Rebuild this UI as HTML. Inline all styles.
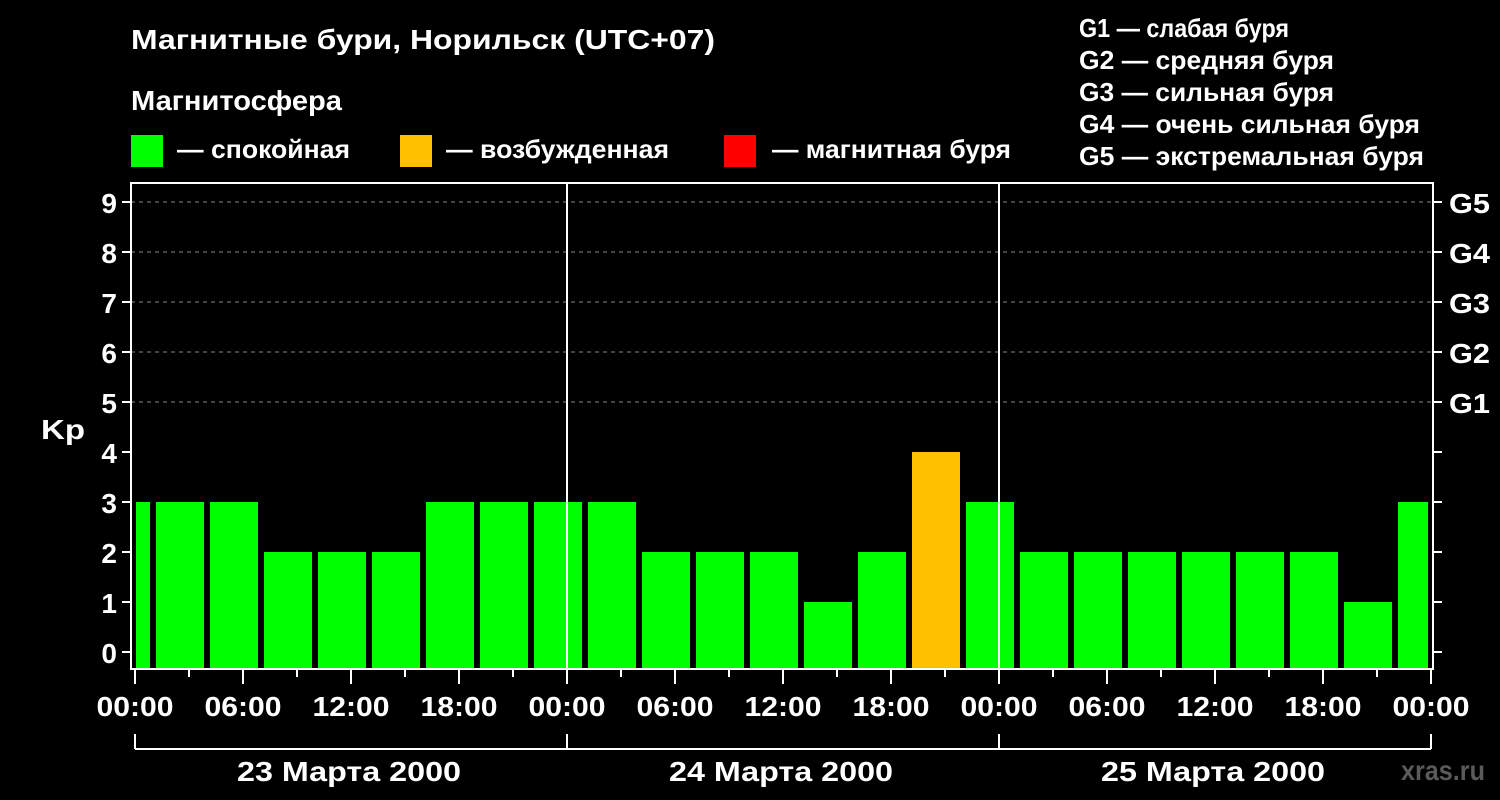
<!DOCTYPE html><html><head><meta charset="utf-8"><style>body{margin:0;background:#000}svg{display:block}text{font-family:"Liberation Sans",Arial,sans-serif;font-weight:bold;fill:#fff}</style></head><body>
<svg width="1500" height="800" xmlns="http://www.w3.org/2000/svg">
<rect width="1500" height="800" fill="#000"/>
<text x="131" y="49" font-size="28" textLength="584" lengthAdjust="spacingAndGlyphs">Магнитные бури, Норильск (UTC+07)</text>
<text x="131" y="110" font-size="28" textLength="211" lengthAdjust="spacingAndGlyphs">Магнитосфера</text>
<rect x="131" y="135" width="32" height="32" fill="#00ff00"/><text x="177" y="158" font-size="26" textLength="173" lengthAdjust="spacingAndGlyphs">— спокойная</text>
<rect x="400" y="135" width="32" height="32" fill="#ffc000"/><text x="446" y="158" font-size="26" textLength="223" lengthAdjust="spacingAndGlyphs">— возбужденная</text>
<rect x="724" y="135" width="32" height="32" fill="#ff0000"/><text x="772" y="158" font-size="26" textLength="239" lengthAdjust="spacingAndGlyphs">— магнитная буря</text>
<g font-size="26"><text x="1079" y="37" textLength="210" lengthAdjust="spacingAndGlyphs">G1 — слабая буря</text><text x="1079" y="69" textLength="255" lengthAdjust="spacingAndGlyphs">G2 — средняя буря</text><text x="1079" y="101" textLength="255" lengthAdjust="spacingAndGlyphs">G3 — сильная буря</text><text x="1079" y="133" textLength="341" lengthAdjust="spacingAndGlyphs">G4 — очень сильная буря</text><text x="1079" y="165" textLength="345" lengthAdjust="spacingAndGlyphs">G5 — экстремальная буря</text></g>
<g stroke="#888" stroke-dasharray="4,4" stroke-width="1"><line x1="131" y1="202" x2="1433" y2="202"/><line x1="131" y1="252" x2="1433" y2="252"/><line x1="131" y1="302" x2="1433" y2="302"/><line x1="131" y1="352" x2="1433" y2="352"/><line x1="131" y1="402" x2="1433" y2="402"/></g>
<g fill="#00ff00">
<rect x="136" y="502" width="14" height="166"/>
<rect x="156" y="502" width="48" height="166"/><rect x="210" y="502" width="48" height="166"/><rect x="264" y="552" width="48" height="116"/><rect x="318" y="552" width="48" height="116"/><rect x="372" y="552" width="48" height="116"/><rect x="426" y="502" width="48" height="166"/><rect x="480" y="502" width="48" height="166"/><rect x="534" y="502" width="48" height="166"/><rect x="588" y="502" width="48" height="166"/><rect x="642" y="552" width="48" height="116"/><rect x="696" y="552" width="48" height="116"/><rect x="750" y="552" width="48" height="116"/><rect x="804" y="602" width="48" height="66"/><rect x="858" y="552" width="48" height="116"/><rect x="966" y="502" width="48" height="166"/><rect x="1020" y="552" width="48" height="116"/><rect x="1074" y="552" width="48" height="116"/><rect x="1128" y="552" width="48" height="116"/><rect x="1182" y="552" width="48" height="116"/><rect x="1236" y="552" width="48" height="116"/><rect x="1290" y="552" width="48" height="116"/><rect x="1344" y="602" width="48" height="66"/><rect x="1398" y="502" width="30" height="166"/>
</g>
<rect x="912" y="452" width="48" height="216" fill="#ffc000"/>
<g stroke="#fff" stroke-width="2" fill="none">
<rect x="131" y="183" width="1302" height="486"/>
<line x1="567" y1="183" x2="567" y2="668"/><line x1="999" y1="183" x2="999" y2="668"/>
<path d="M122 202h9M122 252h9M122 302h9M122 352h9M122 402h9M122 452h9M122 502h9M122 552h9M122 602h9M122 652h9"/>
<path d="M1433 202h9M1433 252h9M1433 302h9M1433 352h9M1433 402h9M1433 452h9M1433 502h9M1433 552h9M1433 602h9M1433 652h9"/>
<path d="M135 669v15M243 669v15M351 669v15M459 669v15M567 669v15M675 669v15M783 669v15M891 669v15M999 669v15M1107 669v15M1215 669v15M1323 669v15M1431 669v15"/>
<path d="M189 669v8M297 669v8M405 669v8M513 669v8M621 669v8M729 669v8M837 669v8M945 669v8M1053 669v8M1161 669v8M1269 669v8M1377 669v8"/>
<path d="M135 734v15M567 734v15M999 734v15M1431 734v15M135 749H1431"/>
</g>
<g font-size="28" text-anchor="end"><text x="117" y="213">9</text><text x="117" y="263">8</text><text x="117" y="313">7</text><text x="117" y="363">6</text><text x="117" y="413">5</text><text x="117" y="463">4</text><text x="117" y="513">3</text><text x="117" y="563">2</text><text x="117" y="613">1</text><text x="117" y="663">0</text></g>
<text x="41" y="439" font-size="28" textLength="44" lengthAdjust="spacingAndGlyphs">Kp</text>
<g font-size="28"><text x="1449" y="213" textLength="41" lengthAdjust="spacingAndGlyphs">G5</text><text x="1449" y="263" textLength="41" lengthAdjust="spacingAndGlyphs">G4</text><text x="1449" y="313" textLength="41" lengthAdjust="spacingAndGlyphs">G3</text><text x="1449" y="363" textLength="41" lengthAdjust="spacingAndGlyphs">G2</text><text x="1449" y="413" textLength="41" lengthAdjust="spacingAndGlyphs">G1</text></g>
<g font-size="28" text-anchor="middle"><text x="135" y="716" textLength="77" lengthAdjust="spacingAndGlyphs">00:00</text><text x="243" y="716" textLength="77" lengthAdjust="spacingAndGlyphs">06:00</text><text x="351" y="716" textLength="77" lengthAdjust="spacingAndGlyphs">12:00</text><text x="459" y="716" textLength="77" lengthAdjust="spacingAndGlyphs">18:00</text><text x="567" y="716" textLength="77" lengthAdjust="spacingAndGlyphs">00:00</text><text x="675" y="716" textLength="77" lengthAdjust="spacingAndGlyphs">06:00</text><text x="783" y="716" textLength="77" lengthAdjust="spacingAndGlyphs">12:00</text><text x="891" y="716" textLength="77" lengthAdjust="spacingAndGlyphs">18:00</text><text x="999" y="716" textLength="77" lengthAdjust="spacingAndGlyphs">00:00</text><text x="1107" y="716" textLength="77" lengthAdjust="spacingAndGlyphs">06:00</text><text x="1215" y="716" textLength="77" lengthAdjust="spacingAndGlyphs">12:00</text><text x="1323" y="716" textLength="77" lengthAdjust="spacingAndGlyphs">18:00</text><text x="1431" y="716" textLength="77" lengthAdjust="spacingAndGlyphs">00:00</text>
<text x="349" y="781" textLength="224" lengthAdjust="spacingAndGlyphs">23 Марта 2000</text><text x="781" y="781" textLength="224" lengthAdjust="spacingAndGlyphs">24 Марта 2000</text><text x="1213" y="781" textLength="224" lengthAdjust="spacingAndGlyphs">25 Марта 2000</text></g>
<text x="1401" y="780" font-size="28" style="fill:#5a5a5a" textLength="84" lengthAdjust="spacingAndGlyphs">xras.ru</text>
</svg></body></html>
